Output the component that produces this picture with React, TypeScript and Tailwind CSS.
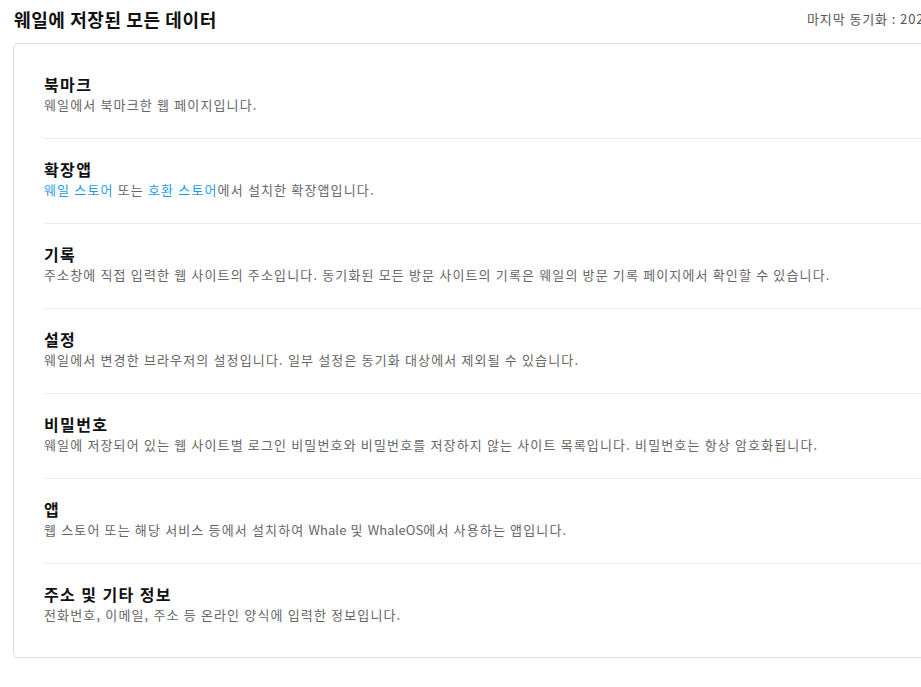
const items: { title: string; desc: React.ReactNode }[] = [
  { title: '북마크', desc: '웨일에서 북마크한 웹 페이지입니다.' },
  {
    title: '확장앱',
    desc: (
      <>
        <span className="text-[#1e9cf0]">웨일 스토어</span> 또는{' '}
        <span className="text-[#1e9cf0]">호환 스토어</span>에서 설치한 확장앱입니다.
      </>
    ),
  },
  {
    title: '기록',
    desc: '주소창에 직접 입력한 웹 사이트의 주소입니다. 동기화된 모든 방문 사이트의 기록은 웨일의 방문 기록 페이지에서 확인할 수 있습니다.',
  },
  { title: '설정', desc: '웨일에서 변경한 브라우저의 설정입니다. 일부 설정은 동기화 대상에서 제외될 수 있습니다.' },
  {
    title: '비밀번호',
    desc: '웨일에 저장되어 있는 웹 사이트별 로그인 비밀번호와 비밀번호를 저장하지 않는 사이트 목록입니다. 비밀번호는 항상 암호화됩니다.',
  },
  {
    title: '앱',
    desc: (
      <>
        웹 스토어 또는 해당 서비스 등에서 설치하여 <span className="tracking-[0.1px]">Whale</span> 및{' '}
        <span className="tracking-[0.1px]">WhaleOS</span>에서 사용하는 앱입니다.
      </>
    ),
  },
  { title: '주소 및 기타 정보', desc: '전화번호, 이메일, 주소 등 온라인 양식에 입력한 정보입니다.' },
];

export default function App() {
  return (
    <div className="w-[921px] h-[687px] overflow-hidden bg-white font-['Noto_Sans_CJK_KR',sans-serif]">
      <div className="w-[1000px] pl-[13px]">
        {/* header */}
        <div className="grid h-[43px] grid-cols-[794px_auto] items-center pb-[6px]">
          <h1 className="pl-[1px] text-[18px] font-bold leading-none tracking-[0.6px] text-[#111]">
            웨일에 저장된 모든 데이터
          </h1>
          <span className="whitespace-nowrap text-[13px] leading-none tracking-[0.9px] text-[#555]">
            마지막 동기화 : 2024. 5. 21. 오후 3:42
          </span>
        </div>

        {/* card */}
        <div className="rounded-[5px] border border-[#dcdcdc] pb-[9px] pl-[30px] pt-[10px]">
          {items.map((it, i) => (
            <div
              key={it.title}
              className={`pb-[24px] pt-[20px] ${i < items.length - 1 ? 'border-b border-[#ebebeb]' : ''}`}
            >
              <p className="text-[16px] font-bold leading-[20px] tracking-[1.4px] text-[#111]">{it.title}</p>
              <p className="mt-[2px] whitespace-nowrap text-[13px] leading-[18px] tracking-[1.15px] text-[#666]">
                {it.desc}
              </p>
            </div>
          ))}
        </div>
      </div>
    </div>
  );
}
